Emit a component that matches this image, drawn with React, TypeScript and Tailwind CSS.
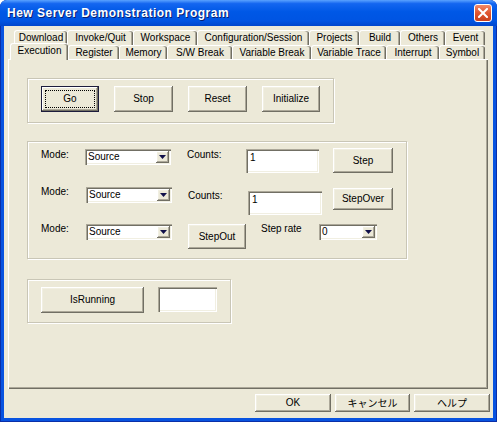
import React from "react";

const raised =
  "bg-[#ECE9D8] shadow-[inset_-1px_-1px_0_#716F64,inset_1px_1px_0_#FFFFFF,inset_-2px_-2px_0_#ACA899,inset_2px_2px_0_#F1EFE2]";
const focusedBtn =
  "bg-[#ECE9D8] shadow-[inset_0_0_0_1px_#1C1C3C,inset_-2px_-2px_0_#716F64,inset_2px_2px_0_#FFFFFF,inset_-3px_-3px_0_#ACA899] outline outline-1 outline-dotted outline-black outline-offset-[-5px]";
const sunken =
  "bg-white shadow-[inset_1px_1px_0_#ACA899,inset_2px_2px_0_#716F64,inset_-1px_-1px_0_#FFFFFF,inset_-2px_-2px_0_#F1EFE2]";
const groupBox =
  "border border-[#C9C6B6] shadow-[inset_1px_1px_0_#FFFFFF,1px_1px_0_#FFFFFF]";

function Button({
  className,
  children,
  focused,
}: {
  className: string;
  children: React.ReactNode;
  focused?: boolean;
}) {
  return (
    <div
      className={`${focused ? focusedBtn : raised} flex shrink-0 items-center justify-center text-[10px] leading-none text-black ${className}`}
    >
      {children}
    </div>
  );
}

function Select({ className, value }: { className: string; value: string }) {
  return (
    <div
      className={`${sunken} flex shrink-0 items-center justify-between pl-[3px] pr-[2px] text-[10px] leading-none text-black ${className}`}
    >
      <span>{value}</span>
      <div
        className={`${raised} flex h-[12px] w-[13px] items-center justify-center`}
      >
        <svg width="7" height="4" viewBox="0 0 7 4">
          <path d="M0 0h7L3.5 4z" fill="#10104A" />
        </svg>
      </div>
    </div>
  );
}

function Input({ className, value }: { className: string; value?: string }) {
  return (
    <div
      className={`${sunken} shrink-0 pl-[4px] pt-[4px] text-[10px] leading-none text-black ${className}`}
    >
      {value}
    </div>
  );
}

function Label({ className, children }: { className: string; children: React.ReactNode }) {
  return (
    <div className={`shrink-0 text-[10px] leading-[12px] text-black ${className}`}>
      {children}
    </div>
  );
}

const backTabs = [
  { t: "Download", w: "w-[53px]" },
  { t: "Invoke/Quit", w: "w-[66px]" },
  { t: "Workspace", w: "w-[64px]" },
  { t: "Configuration/Session", w: "w-[112px]" },
  { t: "Projects", w: "w-[50px]" },
  { t: "Build", w: "w-[41px]" },
  { t: "Others", w: "w-[45px]" },
  { t: "Event", w: "w-[40px]" },
];

const frontTabs = [
  { t: "Register", w: "w-[51px]" },
  { t: "Memory", w: "w-[48px]" },
  { t: "S/W Break", w: "w-[65px]" },
  { t: "Variable Break", w: "w-[79px]" },
  { t: "Variable Trace", w: "w-[75px]" },
  { t: "Interrupt", w: "w-[53px]" },
  { t: "Symbol", w: "w-[46px]" },
];

const tabCls =
  "flex shrink-0 items-center justify-center rounded-t-[3px] border-l border-t border-white bg-[#ECE9D8] text-[10px] leading-none text-black shadow-[inset_-1px_0_0_#716F64,inset_-2px_0_0_#ACA899]";

export default function App() {
  return (
    <div className="relative h-[424px] w-[500px] bg-white font-['Liberation_Sans',Arial,sans-serif]">
      <div className="flex h-[422px] w-[497px] flex-col overflow-hidden rounded-t-[7px] bg-[#0853E0] shadow-[inset_0_0_0_1px_#0A2FA8]">
        {/* Title bar */}
        <div className="flex h-[26px] shrink-0 items-center justify-between bg-[linear-gradient(to_bottom,#5AA2FF_0%,#1466F0_14%,#0058E6_45%,#0054E2_80%,#0046CC_100%)] pl-[7px] pr-[5px]">
          <div className="text-[12px] font-bold tracking-[0.5px] text-white [text-shadow:1px_1px_0_#0A2070]">
            Hew Server Demonstration Program
          </div>
          <div className="flex h-[18px] w-[18px] items-center justify-center rounded-[3px] border border-white bg-[linear-gradient(to_bottom,#F08A6A,#E0552F_50%,#C8401C)]">
            <svg width="10" height="10" viewBox="0 0 10 10">
              <path d="M1 1L9 9M9 1L1 9" stroke="#fff" strokeWidth="2" strokeLinecap="square" />
            </svg>
          </div>
        </div>

        {/* Body */}
        <div className="mx-[4px] mb-[4px] flex flex-1 flex-col bg-[#ECE9D8]">
          {/* back tab row */}
          <div className="ml-[10px] mt-[4px] flex h-[15px]">
            {backTabs.map((b) => (
              <div key={b.t} className={`${tabCls} ${b.w} h-[15px]`}>
                {b.t}
              </div>
            ))}
          </div>
          {/* front tab row */}
          <div className="relative z-10 -mb-[1px] -mt-[2px] ml-[6px] flex h-[17px] items-start">
            <div className={`${tabCls} h-[17px] w-[58px] pb-[2px]`}>Execution</div>
            {frontTabs.map((b) => (
              <div key={b.t} className={`${tabCls} ${b.w} mt-[2px] h-[14px]`}>
                {b.t}
              </div>
            ))}
          </div>

          {/* Panel */}
          <div className="ml-[4px] flex h-[330px] w-[480px] flex-col border-l border-t border-white pl-[18px] pt-[18px] shadow-[inset_-1px_-1px_0_#716F64,inset_-2px_-2px_0_#ACA899]">
            {/* Group 1 */}
            <div className={`${groupBox} flex h-[45px] w-[307px] items-start gap-[15px] pl-[13px] pt-[7px]`}>
              <Button focused className="h-[26px] w-[58px]">Go</Button>
              <Button className="h-[26px] w-[59px]">Stop</Button>
              <Button className="h-[26px] w-[59px]">Reset</Button>
              <Button className="h-[26px] w-[58px]">Initialize</Button>
            </div>

            {/* Group 2 */}
            <div className={`${groupBox} mt-[18px] flex h-[118px] w-[380px] flex-col pl-[13px] pt-[6px]`}>
              {/* row 1 */}
              <div className="flex items-start">
                <Label className="mt-[1px] w-[44px]">Mode:</Label>
                <Select className="mt-[1px] h-[16px] w-[86px]" value="Source" />
                <Label className="ml-[16px] mt-[1px] w-[59px]">Counts:</Label>
                <Input className="mt-[1px] h-[24px] w-[73px]" value="1" />
                <Button className="ml-[14px] h-[25px] w-[60px]">Step</Button>
              </div>
              {/* row 2 */}
              <div className="mt-[13px] flex items-start">
                <Label className="w-[45px]">Mode:</Label>
                <Select className="mt-[1px] h-[16px] w-[86px]" value="Source" />
                <Label className="ml-[16px] mt-[4px] w-[60px]">Counts:</Label>
                <Input className="mt-[5px] h-[24px] w-[74px]" value="1" />
                <Button className="ml-[11px] mt-[2px] h-[22px] w-[60px]">StepOver</Button>
              </div>
              {/* row 3 */}
              <div className="mt-[8px] flex items-start">
                <Label className="w-[45px]">Mode:</Label>
                <Select className="mt-[1px] h-[16px] w-[86px]" value="Source" />
                <Button className="ml-[16px] mt-[1px] h-[25px] w-[58px]">StepOut</Button>
                <Label className="ml-[15px] w-[58px]">Step rate</Label>
                <Select className="mt-[1px] h-[16px] w-[58px]" value="0" />
              </div>
            </div>

            {/* Group 3 */}
            <div className={`${groupBox} mt-[20px] flex h-[44px] w-[204px] items-start gap-[14px] pl-[13px] pt-[7px]`}>
              <Button className="h-[26px] w-[103px]">IsRunning</Button>
              <Input className="h-[25px] w-[59px]" />
            </div>
          </div>

          {/* Bottom buttons */}
          <div className="mt-[5px] flex justify-end gap-[4px] pr-[3px]">
            <Button className="h-[18px] w-[76px]">OK</Button>
            <Button className="h-[18px] w-[75px] font-['Noto_Sans_CJK_JP',sans-serif]">キャンセル</Button>
            <Button className="h-[18px] w-[76px] font-['Noto_Sans_CJK_JP',sans-serif]">ヘルプ</Button>
          </div>
        </div>
      </div>
    </div>
  );
}
